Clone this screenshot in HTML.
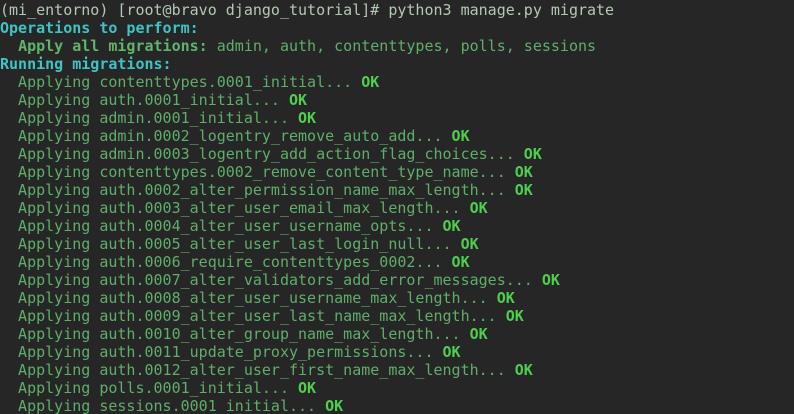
<!DOCTYPE html><html><head><style>
html,body{margin:0;padding:0;background:#262626;width:794px;height:414px;overflow:hidden}
pre{margin:0;padding:1px 0 0 0;font-family:"DejaVu Sans Mono","Liberation Mono",monospace;font-size:15px;line-height:18px;color:#5fae6a;white-space:pre}
.p{color:#b4c8b4}.c{color:#3ec4c4;font-weight:bold}.g{color:#62b36b;font-weight:bold}.ok{color:#4ed04e;font-weight:bold}
</style></head><body><pre><span class="p">(mi_entorno) [root@bravo django_tutorial]# python3 manage.py migrate</span>
<span class="c">Operations to perform:</span>
  <span class="g">Apply all migrations:</span> admin, auth, contenttypes, polls, sessions
<span class="c">Running migrations:</span>
  Applying contenttypes.0001_initial... <span class="ok">OK</span>
  Applying auth.0001_initial... <span class="ok">OK</span>
  Applying admin.0001_initial... <span class="ok">OK</span>
  Applying admin.0002_logentry_remove_auto_add... <span class="ok">OK</span>
  Applying admin.0003_logentry_add_action_flag_choices... <span class="ok">OK</span>
  Applying contenttypes.0002_remove_content_type_name... <span class="ok">OK</span>
  Applying auth.0002_alter_permission_name_max_length... <span class="ok">OK</span>
  Applying auth.0003_alter_user_email_max_length... <span class="ok">OK</span>
  Applying auth.0004_alter_user_username_opts... <span class="ok">OK</span>
  Applying auth.0005_alter_user_last_login_null... <span class="ok">OK</span>
  Applying auth.0006_require_contenttypes_0002... <span class="ok">OK</span>
  Applying auth.0007_alter_validators_add_error_messages... <span class="ok">OK</span>
  Applying auth.0008_alter_user_username_max_length... <span class="ok">OK</span>
  Applying auth.0009_alter_user_last_name_max_length... <span class="ok">OK</span>
  Applying auth.0010_alter_group_name_max_length... <span class="ok">OK</span>
  Applying auth.0011_update_proxy_permissions... <span class="ok">OK</span>
  Applying auth.0012_alter_user_first_name_max_length... <span class="ok">OK</span>
  Applying polls.0001_initial... <span class="ok">OK</span>
  Applying sessions.0001_initial... <span class="ok">OK</span></pre></body></html>
